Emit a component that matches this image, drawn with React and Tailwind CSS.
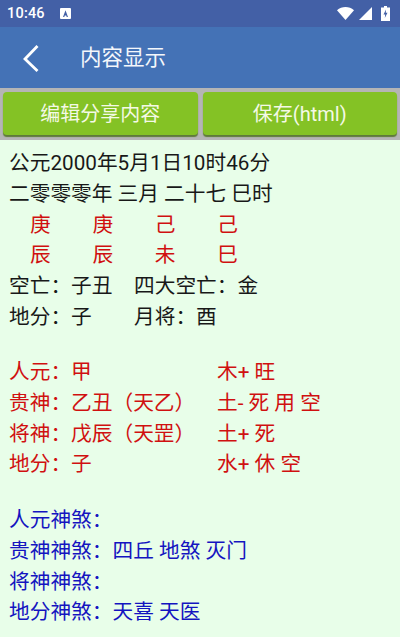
import React from 'react';

const FONT = "font-['Roboto','Noto_Sans_CJK_SC',sans-serif]";

const Line = ({ children, className = '' }) => (
  <div className={`h-[30.75px] leading-[30.75px] whitespace-pre ${className}`}>{children}</div>
);

const Row = ({ left, right, rightClass = 'w-[145px]', leftClass = 'w-[208px]' }) => (
  <div className="flex h-[30.75px] leading-[30.75px] whitespace-pre">
    <div className={`shrink-0 ${leftClass}`}>{left}</div>
    <div className={rightClass}>{right}</div>
  </div>
);

const Pillars = ({ items }) => (
  <div className="flex h-[30.75px] leading-[30.75px] pl-[21px] text-[#d01010]">
    {items.map((c, i) => (
      <div key={i} className="w-[62.4px]">{c}</div>
    ))}
  </div>
);

export default function App() {
  return (
    <div className={`w-[400px] h-[637px] overflow-hidden bg-[#e8fee9] ${FONT}`}>
      {/* 状态栏 */}
      <div className="h-[27px] bg-[#4360a6] flex items-center justify-between pl-[7px] pr-[10px] text-white">
        <div className="flex items-center gap-[15px]">
          <span className="text-[14.5px] font-medium tracking-[0.2px]">10:46</span>
          <svg width="11" height="11" viewBox="0 0 11 11">
            <rect width="11" height="11" rx="1" fill="#fff" />
            <path d="M3 9 L5.5 2.2 L8 9 H6.7 L6.2 7.5 H4.8 L4.3 9 Z" fill="#4360a6" />
          </svg>
        </div>
        <div className="flex items-center gap-[5px]">
          <svg width="17" height="13" viewBox="0 0 17 13">
            <path d="M0 3.2 C4.8 -1 12.2 -1 17 3.2 L8.5 13 Z" fill="#fff" />
          </svg>
          <svg width="13" height="13" viewBox="0 0 13 13">
            <path d="M13 0 V13 H0 Z" fill="#fff" />
          </svg>
          <svg width="9" height="15" viewBox="0 0 9 15" className="ml-[4px]">
            <path d="M3 0 H6 V1.5 H9 V15 H0 V1.5 H3 Z" fill="#fff" />
            <path d="M5 3.5 L2.5 8.5 H4.2 L3.8 12 L6.5 6.8 H4.8 Z" fill="#4360a6" />
          </svg>
        </div>
      </div>

      {/* 标题栏 */}
      <div className="h-[61px] bg-[#4472b6] flex items-center text-white">
        <svg width="18" height="28" viewBox="0 0 18 28" fill="none" className="ml-[22px]">
          <path d="M15.5 2 L3 15 L15.5 27" stroke="#fff" strokeWidth="2.8" />
        </svg>
        <span className="ml-[40px] pt-[2px] text-[21.5px] text-[#f4f7fb]">内容显示</span>
      </div>

      {/* 按钮 */}
      <div className="h-[52px] bg-[#b5b5b5] flex gap-[5px] px-[3px] pt-[4px] pb-[5px]">
        <button className="flex-1 bg-[#84c225] rounded-[4px] text-[#f4f9e6] text-[20px] shadow-[0_2px_1px_#5f7a3a]">
          编辑分享内容
        </button>
        <button className="flex-1 bg-[#84c225] rounded-[4px] text-[#f4f9e6] text-[20px] shadow-[0_2px_1px_#5f7a3a]">
          保存(html)
        </button>
      </div>

      {/* 内容 */}
      <div className="pl-[9px] pt-[8px] text-[20.7px] text-[#181818]">
        <Line>公元2000年5月1日10时46分</Line>
        <Line>二零零零年 三月 二十七 巳时</Line>
        <Pillars items={['庚', '庚', '己', '己']} />
        <Pillars items={['辰', '辰', '未', '巳']} />
        <Row left="空亡：子丑" right="四大空亡：金" leftClass="w-[125px]" />
        <Row left="地分：子" right="月将：酉" leftClass="w-[125px]" />

        <div className="mt-[24.5px] text-[#d01010]">
          <Row left="人元：甲" right="木+ 旺" />
          <Row left="贵神：乙丑（天乙）" right="土- 死 用 空" />
          <Row left="将神：戊辰（天罡）" right="土+ 死" />
          <Row left="地分：子" right="水+ 休 空" />
        </div>

        <div className="mt-[25px] text-[#1414c0]">
          <Line>人元神煞：</Line>
          <Line>贵神神煞：四丘 地煞 灭门</Line>
          <Line>将神神煞：</Line>
          <Line>地分神煞：天喜 天医</Line>
        </div>
      </div>
    </div>
  );
}
